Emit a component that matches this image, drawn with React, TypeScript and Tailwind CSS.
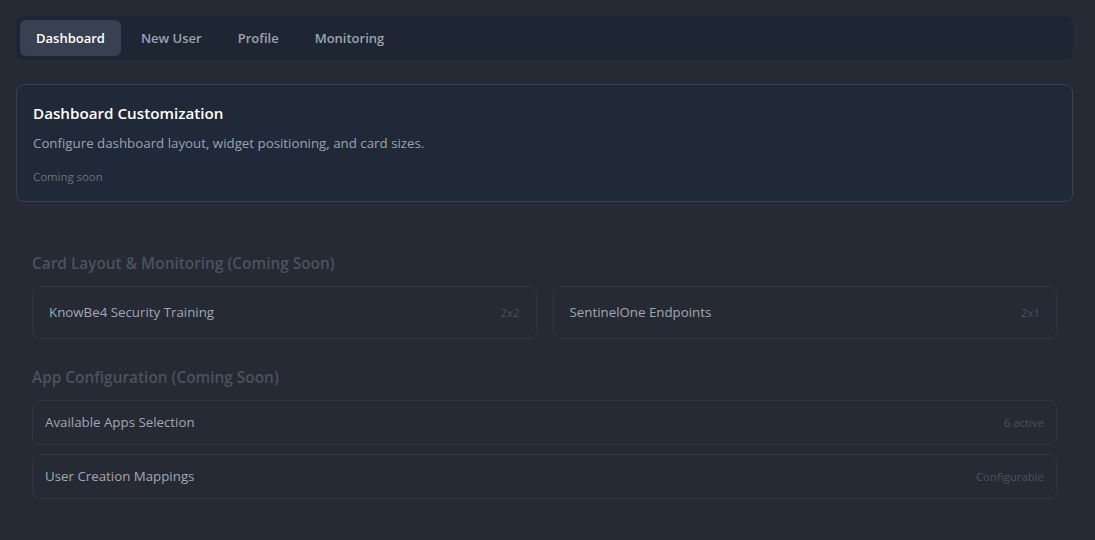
import React, { useState } from 'react';

const tabs = ['Dashboard', 'New User', 'Profile', 'Monitoring'];

const layoutCards = [
  { name: 'KnowBe4 Security Training', size: '2x2' },
  { name: 'SentinelOne Endpoints', size: '2x1' },
];

const appRows = [
  { name: 'Available Apps Selection', meta: '6 active' },
  { name: 'User Creation Mappings', meta: 'Configurable' },
];

export default function App() {
  const [active, setActive] = useState('Dashboard');

  return (
    <div
      className="min-h-[540px] w-full bg-[#252a35] pb-4 pl-4 pr-[22px] pt-4"
      style={{ fontFamily: '"Open Sans", "Noto Sans", sans-serif' }}
    >
      <div className="flex gap-1 rounded-lg bg-[#1f2633] p-1">
        {tabs.map((t) => (
          <button
            key={t}
            onClick={() => setActive(t)}
            className={
              t === active
                ? 'h-9 rounded-md bg-[#374151] px-4 pt-0.5 text-[13px] font-semibold text-white'
                : 'h-9 rounded-md px-4 pt-0.5 text-[13px] font-semibold text-[#9ca3af]'
            }
          >
            {t}
          </button>
        ))}
      </div>

      <div className="mt-6 rounded-lg border border-[#374151] bg-[#1f2937] p-4">
        <h2 className="text-[15.2px] font-semibold leading-6 text-white">Dashboard Customization</h2>
        <p className="mt-2 text-[13.3px] leading-5 text-[#9ca3af]">
          Configure dashboard layout, widget positioning, and card sizes.
        </p>
        <p className="mt-4 text-[11.4px] leading-4 text-[#6b7280]">Coming soon</p>
      </div>

      <div className="mt-[34px] px-4 pt-4">
        <h3 className="text-[15.4px] font-semibold leading-6 text-[#4a5260]">
          Card Layout &amp; Monitoring (Coming Soon)
        </h3>
        <div className="mt-[10px] grid grid-cols-2 gap-4">
          {layoutCards.map((c) => (
            <div
              key={c.name}
              className="flex h-[53px] items-center justify-between rounded-lg border border-[#2f3744] px-4"
            >
              <span className="text-[13.3px] font-medium text-[#a3a8b0]">{c.name}</span>
              <span className="text-[11.4px] text-[#4b5260]">{c.size}</span>
            </div>
          ))}
        </div>

        <h3 className="mt-[27px] text-[15.4px] font-semibold leading-6 text-[#4a5260]">
          App Configuration (Coming Soon)
        </h3>
        <div className="mt-[10px] flex flex-col gap-[9px]">
          {appRows.map((r) => (
            <div
              key={r.name}
              className="flex h-[45px] items-center justify-between rounded-lg border border-[#2f3744] px-3"
            >
              <span className="text-[13.3px] font-medium text-[#a3a8b0]">{r.name}</span>
              <span className="text-[11.4px] text-[#4b5260]">{r.meta}</span>
            </div>
          ))}
        </div>
      </div>
    </div>
  );
}
